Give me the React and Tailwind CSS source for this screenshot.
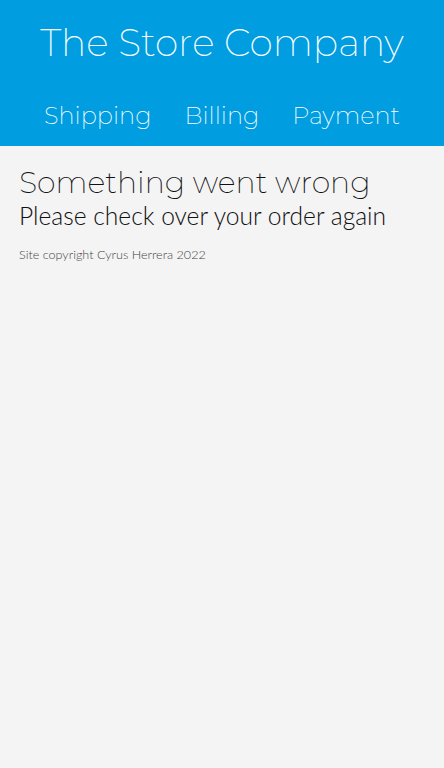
import React from 'react';

const App = () => {
  const links = ['Shipping', 'Billing', 'Payment'];

  return (
    <div className="min-h-screen bg-[#f4f4f4]">
      {/* Header */}
      <header className="h-[146px] bg-[#009ee0] text-white text-center pt-[24px] font-['Montserrat','DejaVu_Sans',sans-serif] font-extralight">
        <h1 className="text-[37.7px] leading-[37.5px]">The Store Company</h1>
        <nav className="mt-[42px] flex justify-center gap-[33px] text-[24px] leading-[24px]">
          {links.map((link) => (
            <a key={link} href="#" className="text-white">
              {link}
            </a>
          ))}
        </nav>
      </header>

      {/* Error message */}
      <main className="px-[19px] pt-[22px]">
        <h2 className="text-[30px] leading-[30px] font-extralight text-[#111] font-['Montserrat','DejaVu_Sans',sans-serif]">
          Something went wrong
        </h2>
        <p className="mt-[6px] text-[24.6px] leading-[24.5px] font-light text-[#111] font-['Lato',sans-serif]">
          Please check over your order again
        </p>
        <p className="mt-[20px] text-[12.6px] leading-[12.5px] font-light text-[#444] font-['Lato',sans-serif]">
          Site copyright Cyrus Herrera 2022
        </p>
      </main>
    </div>
  );
};

export default App;
